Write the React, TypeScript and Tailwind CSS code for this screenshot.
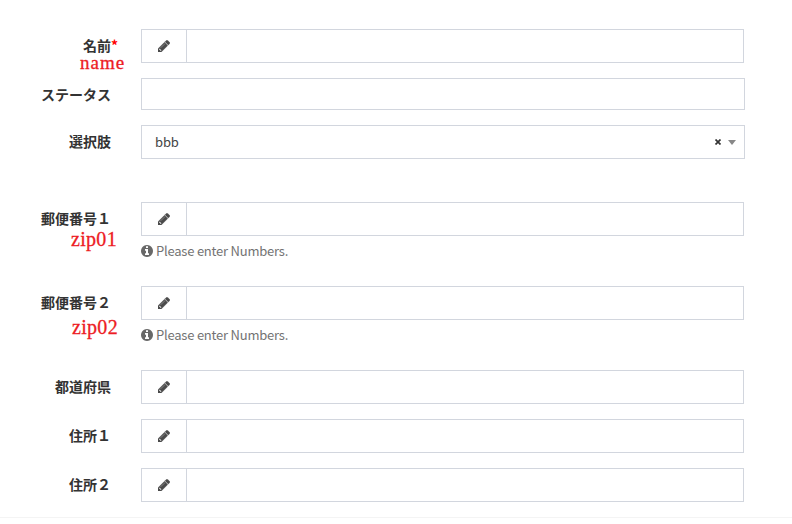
import type { ReactNode } from 'react';

const Pencil = () => (
  <svg viewBox="0 0 1536 1536" className="h-3 w-3 fill-[#4a4a4a] stroke-[#4a4a4a] stroke-[50px]">
    <path d="M363 1408l91-91l-235-235l-91 91v107h128v128h107zM886 480q0-22-22-22q-10 0-17 7l-542 542q-7 7-7 17q0 22 22 22q10 0 17-7l542-542q7-7 7-17zM832 288l416 416l-832 832h-416v-416zM1515 384q0 53-37 90l-166 166l-416-416l166-165q36-38 90-38q53 0 91 38l235 234q37 39 37 91z" />
  </svg>
);

const Info = () => (
  <svg viewBox="128 128 1536 1536" className="h-3 w-3 fill-[#686868]">
    <path d="M1152 1376v-160q0-14-9-23t-23-9h-96v-512q0-14-9-23t-23-9h-320q-14 0-23 9t-9 23v160q0 14 9 23t23 9h96v320h-96q-14 0-23 9t-9 23v160q0 14 9 23t23 9h448q14 0 23-9t9-23zm-128-896v-160q0-14-9-23t-23-9h-192q-14 0-23 9t-9 23v160q0 14 9 23t23 9h192q14 0 23-9t9-23zm640 416q0 209-103 385.5t-279.5 279.5-385.5 103-385.5-103-279.5-279.5-103-385.5 103-385.5 279.5-279.5 385.5-103 385.5 103 279.5 279.5 103 385.5z" />
  </svg>
);

type RowProps = { label: string; required?: boolean; note?: ReactNode; className?: string; children: ReactNode };

const Row = ({ label, required, note, className = '', children }: RowProps) => (
  <div className={`relative flex items-start ${className}`}>
    <div className={`flex h-8 shrink-0 items-center justify-end whitespace-nowrap text-sm leading-[14px] font-bold text-[#333] ${required ? 'mr-[23px] w-[118px]' : 'mr-[30px] w-[111px]'}`}>
      {label}
      {required && <span className="text-[#f00]">*</span>}
    </div>
    {note}
    {children}
  </div>
);

const IconInput = () => (
  <div className="flex h-[34px] w-[603px] border border-[#d2d6de] bg-white">
    <div className="flex w-[45px] items-center justify-center border-r border-[#d2d6de]">
      <Pencil />
    </div>
  </div>
);

const Help = () => (
  <div className="mt-[5px] flex h-5 items-center gap-[3px] text-[13px] tracking-[-0.22px] text-[#737373]">
    <Info />
    <span>Please enter Numbers.</span>
  </div>
);

const noteStyle = "absolute font-['Liberation_Serif',serif] text-[#ed1c24] [-webkit-text-stroke:0.3px_#ed1c24]";

export default function App() {
  return (
    <div className="h-[524px] w-[792px] overflow-hidden bg-white font-['Noto_Sans_CJK_JP',sans-serif]">
      <div className="h-[518px] border-b border-[#f4f4f4] pt-[29px]">
        <Row label="名前" required note={<span className={`${noteStyle} left-20 top-[27px] text-[19px] leading-[13px] tracking-[1px]`}>name</span>}>
          <IconInput />
        </Row>
        <Row label="ステータス" className="mt-[15px] h-8">
          <div className="h-8 w-[604px] border border-[#d2d6de]" />
        </Row>
        <Row label="選択肢" className="mt-[15px]">
          <div className="flex h-[34px] w-[604px] items-center border border-[#d2d6de] pr-2 pl-3 text-[13px] tracking-[-0.1px] text-[#444]">
            <span className="flex-1 pl-px">bbb</span>
            <svg viewBox="0 0 6 6" className="mr-[7px] h-1.5 w-1.5 stroke-[#333] stroke-[1.7px]">
              <path d="M.5 .5L5.5 5.5M5.5 .5L.5 5.5" />
            </svg>
            <span className="border-x-4 border-t-[5px] border-x-transparent border-t-[#888]" />
          </div>
        </Row>
        <Row label="郵便番号１" className="mt-[43px]" note={<span className={`${noteStyle} left-[71px] top-[27px] text-[20px] leading-5 tracking-[0.3px]`}>zip01</span>}>
          <div>
            <IconInput />
            <Help />
          </div>
        </Row>
        <Row label="郵便番号２" className="mt-[25px]" note={<span className={`${noteStyle} left-[72px] top-[31px] text-[20px] leading-5 tracking-[0.3px]`}>zip02</span>}>
          <div>
            <IconInput />
            <Help />
          </div>
        </Row>
        <Row label="都道府県" className="mt-[25px]">
          <IconInput />
        </Row>
        <Row label="住所１" className="mt-[15px]">
          <IconInput />
        </Row>
        <Row label="住所２" className="mt-[15px]">
          <IconInput />
        </Row>
      </div>
    </div>
  );
}
